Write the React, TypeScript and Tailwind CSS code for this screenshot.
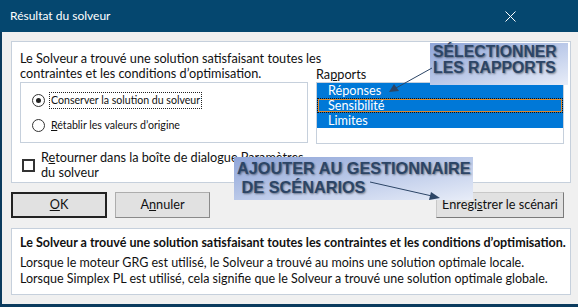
import React from "react";

const ui = "font-['Lato','Open_Sans',sans-serif]";
const small = "font-['Lato','Noto_Sans',sans-serif]";
const callout = "font-['Liberation_Sans',Arial,sans-serif]";

function Radio({ checked, label, hot }: { checked?: boolean; label: React.ReactNode; hot?: boolean }) {
  return (
    <div className="flex h-[25px] items-center gap-[4px] pl-[11px]">
      <span className="flex h-[13px] w-[13px] items-center justify-center rounded-full border border-[#333] bg-white">
        {checked && <span className="h-[5px] w-[5px] rounded-full bg-[#222]" />}
      </span>
      <span
        className={`px-[1px] text-[10.6px] leading-[15px] text-[#111] ${small} ${
          hot ? "border border-dotted border-[#222]" : "border border-transparent"
        }`}
      >
        {label}
      </span>
    </div>
  );
}

function Callout({ children, className }: { children: React.ReactNode; className: string }) {
  return (
    <div
      className={`absolute bg-gradient-to-br from-[#8fa5d8] to-[#e8edf8] font-bold uppercase text-[#2c4566] [text-shadow:1px_1px_2px_rgba(0,0,0,0.45)] ${callout} ${className}`}
    >
      {children}
    </div>
  );
}

export default function App() {
  const listItems = [
    { label: "Réponses", focus: false },
    { label: "Sensibilité", focus: true },
    { label: "Limites", focus: false },
  ];

  return (
    <div className="relative h-[307px] w-[578px] overflow-hidden bg-[#f0f0f0]">
      <div className="flex h-[32px] items-center justify-between bg-[#05476f] pl-[10px] pr-[62px]">
        <span className={`text-[12px] text-white ${small}`}>Résultat du solveur</span>
        <svg width="11" height="11" viewBox="0 0 11 11" className="text-white">
          <path d="M0.5 0.5 L10.5 10.5 M10.5 0.5 L0.5 10.5" stroke="currentColor" strokeWidth="1" />
        </svg>
      </div>

      <div className="flex h-[275px] flex-col border-b-[3px] border-l-[2px] border-[#0b3b5e] pl-[9px] pr-[7px]">
        {/* main panel */}
        <div className="mt-[9px] flex h-[142px] border border-[#c6d0dc] bg-white">
          <div className="flex w-[297px] flex-col pl-[8px] pt-[9px]">
            <p className={`whitespace-nowrap text-[12.7px] leading-[15px] text-[#111] ${ui}`}>
              Le Solveur a trouvé une solution satisfaisant toutes les
              <br />
              contraintes et les conditions d’optimisation.
            </p>
            <div className="mt-[1px] flex h-[61px] w-[288px] flex-col justify-center border border-[#c6d0dc]">
              <Radio checked hot label="Conserver la solution du solveur" />
              <Radio
                label={
                  <>
                    <span className="underline">R</span>établir les valeurs d’origine
                  </>
                }
              />
            </div>
            <div className="mt-[7px] flex items-center gap-[6px] pl-[2px]">
              <span className="h-[13px] w-[13px] border-2 border-[#333] bg-white" />
              <p className={`whitespace-nowrap text-[12.7px] leading-[15px] text-[#111] ${ui}`}>
                R<span className="underline">e</span>tourner dans la boîte de dialogue Paramètres
                <br />
                du solveur
              </p>
            </div>
          </div>
          <div className="flex flex-col pl-[7px] pt-[25px]">
            <span className={`text-[12.7px] leading-[15px] text-[#111] ${ui}`}>
              Ra<span className="underline">p</span>ports
            </span>
            <div className="h-[62px] w-[248px] border border-[#c6d0dc] bg-white">
              {listItems.map((item) => (
                <div
                  key={item.label}
                  className={`h-[15px] bg-[#0078d7] pl-[10px] text-[12.7px] leading-[13px] text-white ${ui} ${
                    item.focus
                      ? "border border-dotted border-[#111] shadow-[inset_0_0_0_1px_#e08a2c]"
                      : "border border-transparent"
                  }`}
                >
                  {item.label}
                </div>
              ))}
            </div>
          </div>
        </div>

        {/* buttons */}
        <div className="mt-[9px] flex h-[26px] items-stretch">
          <button
            className={`w-[96px] border-2 border-[#222] bg-[#e1e1e1] text-[12.7px] text-[#111] ${ui}`}
          >
            <span className="underline">O</span>K
          </button>
          <button
            className={`ml-[8px] w-[95px] border border-[#adadad] border-b-[#8a8a8a] border-r-[#8a8a8a] bg-[#e1e1e1] text-[12.7px] text-[#111] ${ui}`}
          >
            A<span className="underline">n</span>nuler
          </button>
          <div className="flex-1" />
          <button
            className={`mr-[7px] w-[128px] border border-[#c8c8c8] border-b-[#7a7a7a] border-r-[#7a7a7a] bg-[#e1e1e1] text-[12.7px] text-[#111] ${ui}`}
          >
            Enregi<span className="underline">s</span>trer le scénari
          </button>
        </div>

        {/* info panel */}
        <div className="mt-[10px] flex h-[67px] flex-col border border-[#c6d0dc] bg-white pl-[8px] pt-[6px]">
          <p className={`whitespace-nowrap text-[12.5px] font-bold leading-[15px] text-[#111] ${ui}`}>
            Le Solveur a trouvé une solution satisfaisant toutes les contraintes et les conditions d’optimisation.
          </p>
          <p className={`mt-[5px] whitespace-nowrap text-[12.5px] leading-[16px] text-[#111] ${ui}`}>
            Lorsque le moteur GRG est utilisé, le Solveur a trouvé au moins une solution optimale locale.
            <br />
            Lorsque Simplex PL est utilisé, cela signifie que le Solveur a trouvé une solution optimale globale.
          </p>
        </div>
      </div>

      {/* annotations */}
      <Callout className="left-[430px] top-[43px] h-[42px] w-[138px] pl-[3px] pt-[1px] text-[15.8px] leading-[16px]">
        Sélectionner
        <br />
        les rapports
      </Callout>
      <Callout className="left-[234px] top-[157px] h-[43px] w-[239px] pl-[3px] pt-[2px] text-[16.3px] leading-[19px]">
        Ajouter au gestionnaire
        <br />
        &nbsp;de scénarios
      </Callout>
      <svg className="pointer-events-none absolute left-0 top-0" width="578" height="307">
        <line x1="432" y1="68" x2="396" y2="88" stroke="#2c4566" strokeWidth="1" />
        <polygon points="389,92 394,84 399,91" fill="#2c4566" />
        <line x1="370" y1="182" x2="432" y2="196" stroke="#2c4566" strokeWidth="1" />
        <polygon points="440,198 431,192 429,200" fill="#2c4566" />
      </svg>
    </div>
  );
}
